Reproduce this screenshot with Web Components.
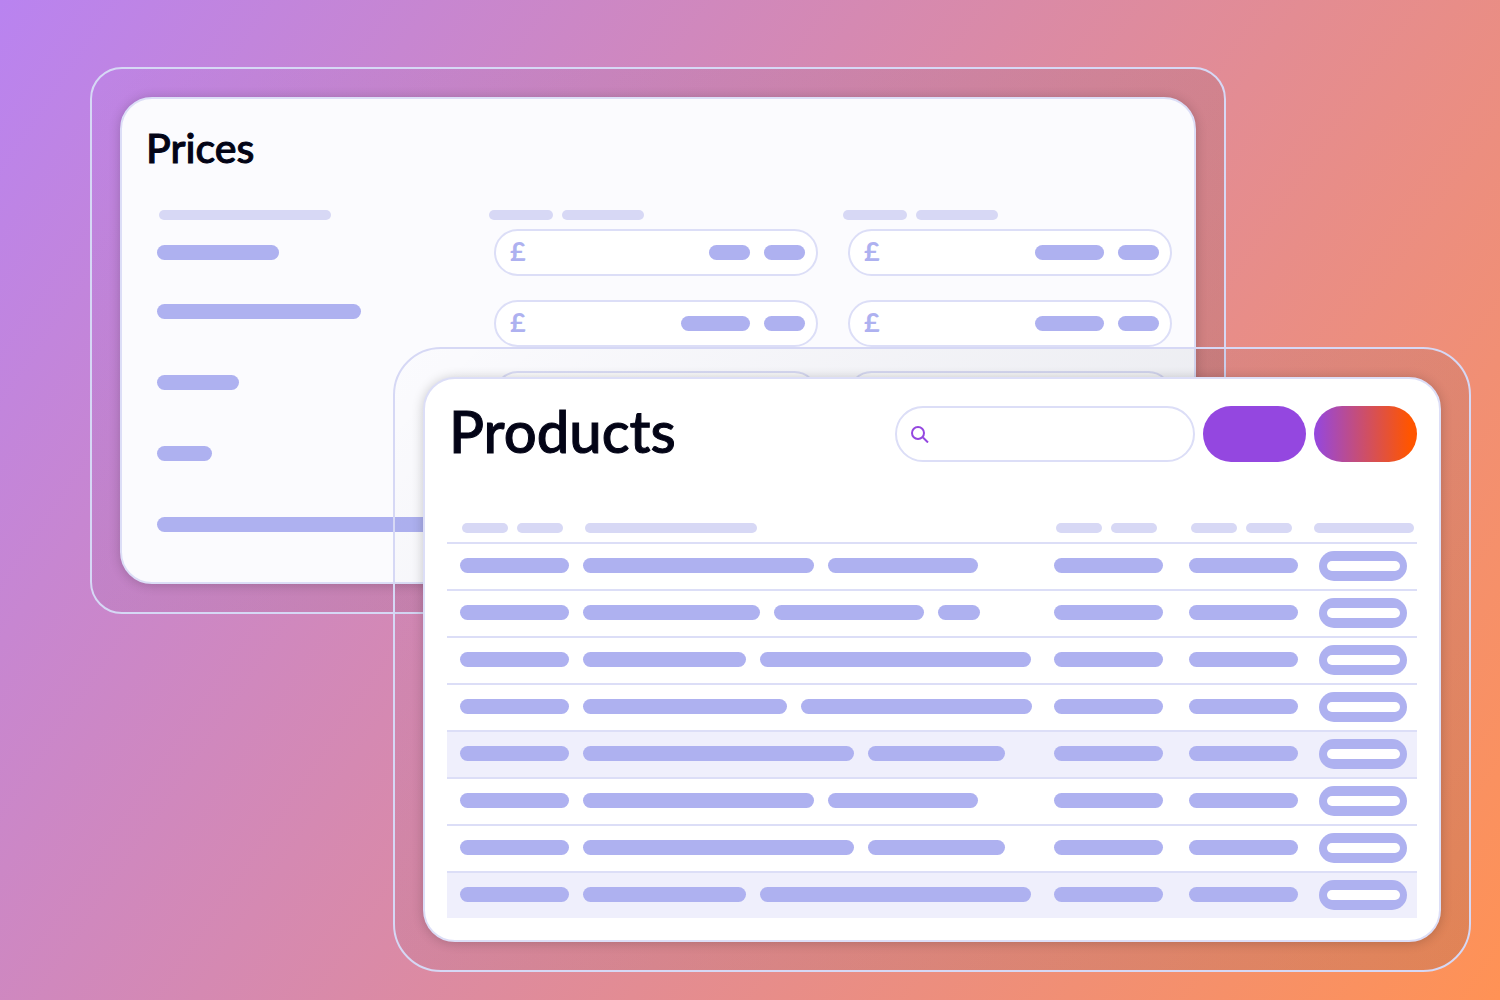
<!DOCTYPE html>
<html lang="en">
<head>
<meta charset="utf-8">
<title>Products and prices</title>
<style>
    html {
        height: 100%;
    }
    body {
        margin: 0;
        min-height: 100%;
        background: linear-gradient(124deg, #b983f0, #ff9255);
        font-family: Lato, "Open Sans", sans-serif;
        color: #030416;
        --line: #dcdef7;
        --head: #d7d8f5;
        --bar: #aeb1f0;
        --violet: #9447e0;
    }
</style>
</head>
<body>
<app-desktop>
    <app-window slot="back" class="back" style="--surface: #fbfbfe; --frame-radius: 32px; --title-size: 41px; --title-height: 44px; --title-gap: 40px">
        <span slot="title">Prices</span>
        <price-table></price-table>
    </app-window>
    <app-window slot="front" class="front" style="--surface: #fff; --frame-radius: 48px; --title-size: 58px; --title-height: 50px; --title-gap: 61px">
        <span slot="title">Products</span>
        <search-box slot="tools"></search-box>
        <pill-button slot="tools" label="Add product"></pill-button>
        <pill-button slot="tools" label="Publish" variant="gradient"></pill-button>
        <product-table></product-table>
    </app-window>
</app-desktop>

<script>
class AppDesktop extends HTMLElement {
    constructor() {
        super();
        const shadowRoot = this.attachShadow({ mode: 'open' });
        shadowRoot.innerHTML = `
            <style>
                :host {
                    display: block;
                    position: relative;
                    min-height: 1000px;
                    overflow: hidden;
                }
                /* two overlapping windows on the desktop */
                ::slotted(.back) {
                    position: absolute;
                    top: 67px;
                    left: 90px;
                    right: 274px;
                }
                ::slotted(.front) {
                    position: absolute;
                    top: 347px;
                    left: 393px;
                    right: 29px;
                }
            </style>
            <slot name="back"></slot>
            <slot name="front"></slot>
        `;
    }
}

class AppWindow extends HTMLElement {
    constructor() {
        super();
        const shadowRoot = this.attachShadow({ mode: 'open' });
        shadowRoot.innerHTML = `
            <style>
                :host {
                    display: block;
                    box-sizing: border-box;
                    padding: 28px;
                    border: 2px solid #d6d8f5;
                    border-radius: var(--frame-radius);
                    background: linear-gradient(135deg, rgba(20, 30, 60, 0), rgba(20, 30, 60, 0.12));
                }
                .window {
                    padding: 27px 22px 22px;
                    border: 2px solid var(--line);
                    border-radius: 32px;
                    background: var(--surface);
                    box-shadow: 0 1px 12px rgba(0, 0, 0, 0.2);
                }
                header {
                    display: flex;
                    align-items: flex-start;
                    gap: 8px;
                    margin-bottom: var(--title-gap);
                }
                h1 {
                    flex: 1;
                    margin: 0;
                    padding-left: 2px;
                    font-size: var(--title-size);
                    line-height: var(--title-height);
                    font-weight: 500;
                    -webkit-text-stroke: 1px currentColor;
                }
            </style>
            <section class="window">
                <header>
                    <h1><slot name="title"></slot></h1>
                    <slot name="tools"></slot>
                </header>
                <slot></slot>
            </section>
        `;
    }
}

class SkeletonBars extends HTMLElement {
    connectedCallback() {
        if (this.shadowRoot) return;
        const shadowRoot = this.attachShadow({ mode: 'open' });
        const bars = this.getAttribute('sizes').split(' ')
            .map(size => `<i style="width: ${size}px"></i>`).join('');
        shadowRoot.innerHTML = `
            <style>
                :host {
                    display: flex;
                    gap: 14px;
                }
                i {
                    flex: none;
                    height: 15px;
                    border-radius: 8px;
                    background: var(--bar);
                }
                :host([head]) {
                    gap: 9px;
                }
                :host([head]) i {
                    height: 10px;
                    border-radius: 5px;
                    background: var(--head);
                }
            </style>
            ${bars}
        `;
    }
}

class SearchBox extends HTMLElement {
    constructor() {
        super();
        const shadowRoot = this.attachShadow({ mode: 'open' });
        shadowRoot.innerHTML = `
            <style>
                :host {
                    display: block;
                    width: 300px;
                }
                label {
                    display: flex;
                    align-items: center;
                    gap: 8px;
                    height: 56px;
                    padding: 0 14px;
                    box-sizing: border-box;
                    border: 2px solid var(--line);
                    border-radius: 28px;
                    background: #fff;
                }
                svg {
                    flex: none;
                    color: var(--violet);
                }
                input {
                    flex: 1;
                    min-width: 0;
                    padding: 0;
                    border: 0;
                    outline: 0;
                    background: none;
                    font: inherit;
                }
            </style>
            <label>
                <svg width="18" height="18" viewBox="0 0 18 18" fill="none" stroke="currentColor" stroke-width="2">
                    <circle cx="7" cy="8" r="6"></circle>
                    <path d="M12 12.5 17 17.5"></path>
                </svg>
                <input type="search" aria-label="Search products">
            </label>
        `;
    }
}

class PillButton extends HTMLElement {
    connectedCallback() {
        if (this.shadowRoot) return;
        const shadowRoot = this.attachShadow({ mode: 'open' });
        shadowRoot.innerHTML = `
            <style>
                :host {
                    display: block;
                }
                button {
                    display: block;
                    width: 103px;
                    height: 56px;
                    padding: 0;
                    border: 0;
                    border-radius: 28px;
                    background: var(--violet);
                    cursor: pointer;
                }
                :host([variant="gradient"]) button {
                    background: linear-gradient(90deg, var(--violet), #ff5500 93%);
                }
                :host([variant="row"]) button {
                    display: flex;
                    align-items: center;
                    justify-content: center;
                    width: 88px;
                    height: 30px;
                    border-radius: 15px;
                    background: var(--bar);
                }
                :host([variant="row"]) button::before {
                    content: "";
                    width: 73px;
                    height: 10px;
                    border-radius: 5px;
                    background: #fff;
                }
            </style>
            <button type="button" aria-label="${this.getAttribute('label')}"></button>
        `;
    }
}

class PriceField extends HTMLElement {
    connectedCallback() {
        if (this.shadowRoot) return;
        const shadowRoot = this.attachShadow({ mode: 'open' });
        shadowRoot.innerHTML = `
            <style>
                :host {
                    display: block;
                }
                label {
                    display: flex;
                    align-items: center;
                    height: 47px;
                    padding: 0 11px 0 14px;
                    box-sizing: border-box;
                    border: 2px solid var(--line);
                    border-radius: 24px;
                    background: #fff;
                    color: var(--bar);
                    font-size: 27px;
                    line-height: 32px;
                    font-weight: 700;
                }
                span {
                    padding-bottom: 4px;
                }
                input {
                    flex: 1;
                    min-width: 0;
                    padding: 0;
                    border: 0;
                    outline: 0;
                    background: none;
                    font: inherit;
                }
            </style>
            <label>
                <span>${this.getAttribute('currency')}</span>
                <input type="text" inputmode="decimal" aria-label="Price">
                <skeleton-bars sizes="${this.getAttribute('sizes')}"></skeleton-bars>
            </label>
        `;
    }
}

class PriceTable extends HTMLElement {
    constructor() {
        super();
        // rows behind the front window carry no currency sign
        const rows = [
            ['122', '41 41', '69 41', '£'],
            ['204', '69 41', '69 41', '£'],
            ['82', '69 41', '69 41', ''],
            ['55', '69 41', '69 41', ''],
            ['286', '69 41', '69 41', ''],
        ];
        const shadowRoot = this.attachShadow({ mode: 'open' });
        shadowRoot.innerHTML = `
            <style>
                :host {
                    display: block;
                }
                table {
                    width: 100%;
                    table-layout: fixed;
                    border-spacing: 0;
                }
                .first { width: 354px; }
                .second { width: 339px; }
                th {
                    padding: 0 0 9px 10px;
                }
                th:first-child {
                    padding-left: 15px;
                }
                td {
                    padding: 0 15px;
                }
                td:first-child {
                    padding-left: 13px;
                }
                td:last-child {
                    padding-right: 0;
                }
                tr + tr price-field {
                    margin-top: 24px;
                }
            </style>
            <table>
                <colgroup><col><col class="first"><col class="second"></colgroup>
                <thead>
                    <tr>
                        <th><skeleton-bars head sizes="172"></skeleton-bars></th>
                        <th><skeleton-bars head sizes="64 82"></skeleton-bars></th>
                        <th><skeleton-bars head sizes="64 82"></skeleton-bars></th>
                    </tr>
                </thead>
                <tbody>
                    ${rows.map(([name, first, second, currency]) => `
                        <tr>
                            <td><skeleton-bars sizes="${name}"></skeleton-bars></td>
                            <td><price-field currency="${currency}" sizes="${first}"></price-field></td>
                            <td><price-field currency="${currency}" sizes="${second}"></price-field></td>
                        </tr>
                    `).join('')}
                </tbody>
            </table>
        `;
    }
}

class ProductTable extends HTMLElement {
    constructor() {
        super();
        const rows = [
            { name: '231 150' },
            { name: '177 150 42' },
            { name: '163 271' },
            { name: '204 231' },
            { name: '271 137', marked: true },
            { name: '231 150' },
            { name: '271 137' },
            { name: '163 271', marked: true },
        ];
        const shadowRoot = this.attachShadow({ mode: 'open' });
        shadowRoot.innerHTML = `
            <style>
                :host {
                    display: block;
                }
                table {
                    width: 100%;
                    table-layout: fixed;
                    border-spacing: 0;
                }
                .code { width: 123px; }
                .stock { width: 135px; }
                .price { width: 128px; }
                .action { width: 113px; }
                th {
                    padding: 0 0 9px 15px;
                }
                th:last-child {
                    padding-left: 10px;
                }
                td {
                    height: 47px;
                    box-sizing: border-box;
                    padding: 0 0 2px 13px;
                    border-top: 2px solid var(--line);
                }
                td:last-child {
                    padding-left: 15px;
                }
                .marked {
                    background: #efeffc;
                }
            </style>
            <table>
                <colgroup>
                    <col class="code"><col><col class="stock"><col class="price"><col class="action">
                </colgroup>
                <thead>
                    <tr>
                        <th><skeleton-bars head sizes="46 46"></skeleton-bars></th>
                        <th><skeleton-bars head sizes="172"></skeleton-bars></th>
                        <th><skeleton-bars head sizes="46 46"></skeleton-bars></th>
                        <th><skeleton-bars head sizes="46 46"></skeleton-bars></th>
                        <th><skeleton-bars head sizes="100"></skeleton-bars></th>
                    </tr>
                </thead>
                <tbody>
                    ${rows.map(row => `
                        <tr class="${row.marked ? 'marked' : ''}">
                            <td><skeleton-bars sizes="109"></skeleton-bars></td>
                            <td><skeleton-bars sizes="${row.name}"></skeleton-bars></td>
                            <td><skeleton-bars sizes="109"></skeleton-bars></td>
                            <td><skeleton-bars sizes="109"></skeleton-bars></td>
                            <td><pill-button variant="row" label="Edit product"></pill-button></td>
                        </tr>
                    `).join('')}
                </tbody>
            </table>
        `;
    }
}

customElements.define('skeleton-bars', SkeletonBars);
customElements.define('search-box', SearchBox);
customElements.define('pill-button', PillButton);
customElements.define('price-field', PriceField);
customElements.define('price-table', PriceTable);
customElements.define('product-table', ProductTable);
customElements.define('app-window', AppWindow);
customElements.define('app-desktop', AppDesktop);
</script>
</body>
</html>
